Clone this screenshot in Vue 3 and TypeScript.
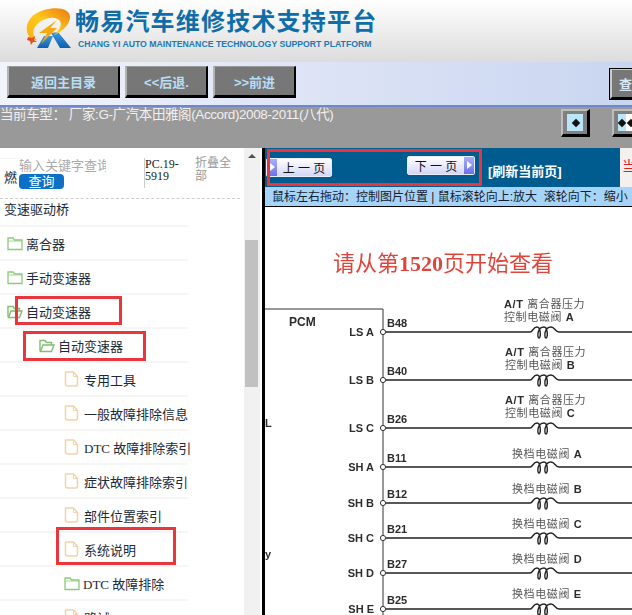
<template>
  <div class="page">
    <header class="brand">
      <svg class="logo" viewBox="0 0 50 50" width="50" height="50" aria-label="logo">
        <defs>
          <linearGradient id="swoosh" x1="0" y1="1" x2="1" y2="0">
            <stop offset="0" stop-color="#f9b010" />
            <stop offset="0.5" stop-color="#ffc81e" />
            <stop offset="1" stop-color="#e9780f" />
          </linearGradient>
          <linearGradient id="leg" x1="0" y1="0" x2="0" y2="1">
            <stop offset="0" stop-color="#3b9be0" />
            <stop offset="1" stop-color="#0f5fae" />
          </linearGradient>
        </defs>
        <path d="M27 26 L34 25 L47 41 L36 41 Z" fill="url(#leg)" />
        <path d="M13 41 L20 29 L29 29 L24 41 Z" fill="url(#leg)" />
        <path
          d="M8 33 C-2 24 2 8 20 3 C34 -1 47 2 46 11 C45 18 39 24 30 28 C36 23 39 17 35 13 C29 8 16 12 11 20 C8 25 9 30 13 33 Z"
          fill="url(#swoosh)"
        />
        <path d="M33 13 L15 26 L23 26 L17 37 L33 21 L26 21 Z" fill="#f7a90f" />
        <path d="M4 30 L8 31 L11 29 L10 33 L13 35 L9 35 L7 38 L6 34 L3 33 Z" fill="#e2501c" />
      </svg>
      <div class="brand-text">
        <div class="brand-title">畅易汽车维修技术支持平台</div>
        <div class="brand-sub">CHANG YI AUTO MAINTENANCE TECHNOLOGY SUPPORT PLATFORM</div>
      </div>
    </header>

    <nav class="toolbar">
      <button class="tool-btn home">返回主目录</button>
      <button class="tool-btn step">&lt;&lt;后退.</button>
      <button class="tool-btn step">&gt;&gt;前进</button>
      <button class="tool-btn search">查询</button>
    </nav>

    <div class="car-bar">
      <span class="car-text">当前车型： 厂家:G-广汽本田雅阁(Accord)2008-2011(八代)</span>
      <button class="mini-btn single"><span class="mini-face"><i class="dia"></i></span></button>
      <button class="mini-btn double">
        <span class="mini-face split"><i class="dia"></i><i class="dia"></i></span>
      </button>
    </div>

    <main class="main">
      <aside class="side">
        <div class="tree">
          <div class="search-block">
            <div class="cut-row">燃</div>
            <div class="search-col">
              <div class="placeholder">输入关键字查询</div>
              <button class="query-btn">查询</button>
            </div>
            <div class="code-col">PC.19-<br />5919</div>
            <div class="fold-col">折叠全部</div>
          </div>
          <div class="root-row">变速驱动桥</div>
          <div v-for="row in rows" :key="row.label + row.level" class="row" :class="`level-${row.level}`">
            <svg v-if="row.icon === 'file'" class="ico file" viewBox="0 0 15 16" width="15" height="16">
              <path d="M1.5 1 H9.5 L13.5 5.5 V13 Q13.5 15 11.5 15 H3.5 Q1.5 15 1.5 13 Z" fill="#fff" stroke="#f3d2a8" stroke-width="1.5" />
              <path d="M9.5 1 V5.5 H13.5" fill="none" stroke="#f3d2a8" stroke-width="1" />
            </svg>
            <svg v-else-if="row.icon === 'open'" class="ico" viewBox="0 0 16 15" width="16" height="15">
              <path d="M1 13 V2.5 H6 L7.5 4.5 H12.5 V7" fill="none" stroke="#7fbf6f" stroke-width="1.4" />
              <path d="M1.5 13.5 L4 7 H15 L12.5 13.5 Z" fill="#fff" stroke="#7fbf6f" stroke-width="1.4" />
            </svg>
            <svg v-else class="ico" viewBox="0 0 16 15" width="16" height="15">
              <path d="M1 13.5 V2 H6 L7.5 4 H15 V13.5 Z" fill="#fff" stroke="#8ccb7c" stroke-width="1.3" />
              <path d="M1 5 H15" stroke="#8ccb7c" stroke-width="0.8" />
            </svg>
            <span class="label">{{ row.label }}</span>
          </div>
        </div>
        <div class="scrollbar">
          <span class="arrow"></span>
          <span class="thumb"></span>
        </div>
      </aside>

      <section class="viewer">
        <div class="pager">
          <div class="pager-blue">
            <button class="page-btn prev"><i class="page-arrow"></i><span>上 一 页</span></button>
            <button class="page-btn next"><span>下 一 页</span><i class="page-arrow"></i></button>
            <span class="refresh">[刷新当前页]</span>
          </div>
          <div class="pager-end">当</div>
        </div>
        <div class="hint">鼠标左右拖动：控制图片位置 | 鼠标滚轮向上:放大&nbsp;&nbsp;滚轮向下：缩小</div>

        <svg class="diagram" viewBox="265 207 367 408" width="367" height="408">
          <text class="heading" x="333" y="271">请从第<tspan class="heading-num">1520</tspan>页开始查看</text>
          <path d="M265 309 H383 V615" fill="none" stroke="#333" stroke-width="1" />
          <text class="bold pcm" x="289" y="326">PCM</text>
          <text class="bold" x="265" y="427">L</text>
          <text class="bold" x="265" y="558">y</text>
          <g v-for="w in wires" :key="w.pin">
            <path :d="`M386 ${w.y} H530 M559 ${w.y} H632`" stroke="#222" stroke-width="1.7" fill="none" />
            <path
              :d="`M530 ${w.y} C533 ${w.y} 533 ${w.y - 5} 537 ${w.y - 5} C541 ${w.y - 5} 541 ${w.y + 6} 539 ${w.y + 6} C537 ${w.y + 6} 537 ${w.y - 5} 544 ${w.y - 5} C548 ${w.y - 5} 548 ${w.y + 6} 546 ${w.y + 6} C544 ${w.y + 6} 544 ${w.y - 5} 551 ${w.y - 5} C555 ${w.y - 5} 555 ${w.y} 559 ${w.y}`"
              stroke="#222"
              stroke-width="1.4"
              fill="none"
            />
            <circle cx="383" :cy="w.y" r="2.6" fill="#fff" stroke="#333" stroke-width="1" />
            <text class="bold" x="374" :y="w.y + 4" text-anchor="end">{{ w.name }}</text>
            <text class="bold" x="387" :y="w.y - 5">{{ w.pin }}</text>
            <text v-for="(line, i) in w.lines" :key="i" class="cn" :x="w.x" :y="w.top + i * 12.5">
              {{ line[0] }}<tspan class="bold">{{ line[1] }}</tspan>{{ line[2] }}
            </text>
          </g>
        </svg>
      </section>

      <div class="mark mark-auto"></div>
      <div class="mark mark-auto-sub"></div>
      <div class="mark mark-desc"></div>
      <div class="mark mark-pager"></div>
    </main>
  </div>
</template>

<script setup lang="ts">
interface TreeRow {
  label: string
  level: number
  icon: 'folder' | 'open' | 'file'
}

interface Wire {
  name: string
  pin: string
  y: number
  x: number
  top: number
  lines: [string, string, string][]
}

const rows: TreeRow[] = [
  { label: '离合器', level: 0, icon: 'folder' },
  { label: '手动变速器', level: 0, icon: 'folder' },
  { label: '自动变速器', level: 0, icon: 'open' },
  { label: '自动变速器', level: 1, icon: 'open' },
  { label: '专用工具', level: 2, icon: 'file' },
  { label: '一般故障排除信息', level: 2, icon: 'file' },
  { label: 'DTC 故障排除索引', level: 2, icon: 'file' },
  { label: '症状故障排除索引', level: 2, icon: 'file' },
  { label: '部件位置索引', level: 2, icon: 'file' },
  { label: '系统说明', level: 2, icon: 'file' },
  { label: 'DTC 故障排除', level: 2, icon: 'folder' },
  { label: '路试', level: 2, icon: 'file' }
]

const clutch = (letter: string): [string, string, string][] => [
  ['', 'A/T', ' 离合器压力'],
  ['控制电磁阀 ', letter, '']
]

const wires: Wire[] = [
  { name: 'LS A', pin: 'B48', y: 332, x: 504, top: 308, lines: clutch('A') },
  { name: 'LS B', pin: 'B40', y: 380, x: 505, top: 356, lines: clutch('B') },
  { name: 'LS C', pin: 'B26', y: 428, x: 505, top: 404, lines: clutch('C') },
  { name: 'SH A', pin: 'B11', y: 467, x: 512, top: 458, lines: [['换档电磁阀 ', 'A', '']] },
  { name: 'SH B', pin: 'B12', y: 503, x: 512, top: 493, lines: [['换档电磁阀 ', 'B', '']] },
  { name: 'SH C', pin: 'B21', y: 538, x: 512, top: 528, lines: [['换档电磁阀 ', 'C', '']] },
  { name: 'SH D', pin: 'B27', y: 573, x: 512, top: 563, lines: [['换档电磁阀 ', 'D', '']] },
  { name: 'SH E', pin: 'B25', y: 609, x: 512, top: 598, lines: [['换档电磁阀 ', 'E', '']] }
]
</script>

<style>
html,
body {
  margin: 0;
  overflow: hidden;
  background: #fff;
}
</style>

<style scoped>
.page {
  width: 632px;
  height: 615px;
  overflow: hidden;
  display: flex;
  flex-direction: column;
  font-family: "Liberation Sans", "Noto Sans CJK SC", sans-serif;
  position: relative;
}

button {
  font-family: inherit;
  padding: 0;
  margin: 0;
}

/* Top brand strip */
.brand {
  height: 62px;
  flex: none;
  display: flex;
  align-items: flex-start;
  padding: 7px 0 0 24px;
  box-sizing: border-box;
  background: linear-gradient(#fff, #dcdcdc);
}

.logo {
  flex: none;
}

.brand-text {
  margin-left: 1px;
}

.brand-title {
  font-size: 24px;
  line-height: 28px;
  font-weight: 700;
  letter-spacing: 1.2px;
  color: #0f6ea9;
  white-space: nowrap;
  margin-top: 1px;
}

.brand-sub {
  font-size: 8.7px;
  line-height: 12px;
  font-weight: 700;
  color: #2079b6;
  margin: 2px 0 0 3px;
  white-space: nowrap;
}

/* Button strip */
.toolbar {
  height: 45px;
  flex: none;
  display: flex;
  align-items: flex-start;
  gap: 5px;
  padding: 4px 0 0 7px;
  box-sizing: border-box;
  background: linear-gradient(90deg, #f2f4fb, #dfe5f6 45%, #c9d5f0);
  border-bottom: 2px solid #6f87cf;
}

.tool-btn {
  height: 32px;
  flex: none;
  box-sizing: border-box;
  background: #777;
  color: #b7def7;
  font-size: 13px;
  font-weight: 700;
  border-style: solid;
  border-width: 1px 2px 3px 2px;
  border-color: #9a9a9a #000 #000 #b4b4b4;
}

.home {
  width: 113px;
}

.step {
  width: 83px;
}

.search {
  margin: 2px 0 0 308px;
  width: 60px;
  text-align: left;
  padding-left: 7px;
  outline: 1px solid #000;
  outline-offset: -1px;
  border-width: 2px 0 3px 3px;
  border-color: #c8c8c8 #000 #000 #c8c8c8;
  color: #d6e8f5;
}

/* Current vehicle strip */
.car-bar {
  height: 41px;
  flex: none;
  background: #999;
  display: flex;
  align-items: flex-start;
  position: relative;
}

.car-text {
  color: #f0f0f0;
  font-size: 13.5px;
  line-height: 16px;
  white-space: nowrap;
  width: 561px;
  flex: none;
  letter-spacing: -0.4px;
}

.mini-btn {
  height: 28px;
  width: 29px;
  margin-top: 2px;
  flex: none;
  box-sizing: border-box;
  background: #808080;
  padding: 3px 4px 3px 4px;
  border-style: solid;
  border-width: 2px 3px 3px 2px;
  border-color: #bdbdbd #000 #000 #bdbdbd;
}

.mini-face {
  display: flex;
  align-items: center;
  justify-content: flex-end;
  height: 100%;
  padding-right: 4px;
  box-sizing: border-box;
  background: #b9e6f8;
}

.double {
  margin-left: 22px;
  width: 29px;
}

.split {
  justify-content: center;
  gap: 3px;
  padding: 0;
  background: linear-gradient(90deg, #b9e6f8 50%, #fff 50%);
}

.dia {
  width: 6px;
  height: 6px;
  flex: none;
  background: #111;
  transform: rotate(45deg);
}

/* Body */
.main {
  flex: 1;
  display: flex;
  min-height: 0;
  position: relative;
}

.side {
  width: 262px;
  flex: none;
  display: flex;
  background: #fff;
}

.tree {
  width: 244px;
  flex: none;
  overflow: hidden;
}

.search-block {
  height: 51px;
  box-sizing: border-box;
  width: 240px;
  display: flex;
  border-bottom: 1px dashed #ccc;
  padding-top: 10px;
}

.cut-row {
  width: 19px;
  padding: 11px 0 0 4px;
  box-sizing: border-box;
  font-size: 13px;
  line-height: 16px;
  color: #1c2a3a;
  border-top: 1px solid #f4f4f4;
  height: 30px;
}

.search-col {
  width: 87px;
  overflow: hidden;
  margin-right: 38px;
}

.placeholder {
  font-size: 13px;
  line-height: 16px;
  color: #aaa;
  white-space: nowrap;
}

.query-btn {
  display: block;
  width: 45px;
  height: 15px;
  border: 0;
  border-radius: 4px;
  background: #0b70c6;
  color: #fff;
  font-size: 13px;
  line-height: 15px;
}

.code-col {
  width: 51px;
  height: 30px;
  border-left: 1px solid #ccc;
  box-sizing: border-box;
  font-family: "Liberation Serif", serif;
  font-size: 12px;
  line-height: 12px;
  color: #222;
}

.fold-col {
  width: 40px;
  font-size: 12px;
  line-height: 13px;
  color: #999;
  margin-top: -1px;
}

.root-row {
  height: 28px;
  box-sizing: border-box;
  padding: 2px 0 0 4px;
  font-size: 13px;
  line-height: 18px;
  color: #1c2a3a;
  border-bottom: 2px solid #f5f5f5;
  width: 188px;
}

.row {
  height: 34px;
  width: 188px;
  box-sizing: border-box;
  display: flex;
  align-items: center;
  font-size: 13px;
  color: #1c2a3a;
  border-bottom: 2px solid #f5f5f5;
  white-space: nowrap;
  font-family: "Liberation Serif", "Noto Sans CJK SC", serif;
}

.level-0 {
  padding-left: 7px;
}

.level-1 {
  padding-left: 39px;
}

.level-2 {
  padding-left: 64px;
}

.ico {
  flex: none;
  margin-right: 3px;
}

.ico.file {
  margin-right: 5px;
}

.scrollbar {
  width: 16px;
  flex: none;
  background: #f1f1f1;
  position: relative;
}

.arrow {
  position: absolute;
  left: 4px;
  top: 6px;
  border: 4px solid transparent;
  border-top: 0;
  border-bottom: 4px solid #505050;
}

.thumb {
  position: absolute;
  left: 1px;
  top: 92px;
  width: 13px;
  height: 147px;
  background: #c1c1c1;
}

/* Document viewer */
.viewer {
  flex: 1;
  min-width: 0;
  border-left: 3px solid #000;
  display: flex;
  flex-direction: column;
  background: #fff;
}

.pager {
  height: 39px;
  flex: none;
  display: flex;
}

.pager-blue {
  width: 355px;
  flex: none;
  background: #005c8e;
  position: relative;
  display: flex;
  align-items: flex-start;
}

.pager-end {
  flex: 1;
  background: #f4f0f0;
  color: #e02020;
  font-size: 14px;
  line-height: 36px;
  padding-left: 2px;
}

.page-btn {
  height: 19px;
  flex: none;
  box-sizing: border-box;
  display: flex;
  align-items: center;
  border: 1px solid #e8ecff;
  border-radius: 2px;
  background: linear-gradient(#fff, #d3d6f6);
  font-size: 12px;
  color: #111;
  font-family: "Liberation Sans", "Noto Sans CJK SC", sans-serif;
}

.page-btn span {
  flex: 1;
  text-align: center;
}

.prev {
  width: 66px;
  margin: 10px 0 0 1px;
}

.next {
  width: 68px;
  margin: 8px 0 0 75px;
}

.page-arrow {
  width: 10px;
  height: 17px;
  flex: none;
  background: linear-gradient(#aab0f8, #6a70ea);
  position: relative;
}

.page-arrow::after {
  content: "";
  position: absolute;
  left: 3px;
  top: 4px;
  border: 4.5px solid transparent;
  border-right: 0;
  border-left: 5px solid #fff;
}

.refresh {
  margin: 15px 0 0 13px;
  color: #fff;
  font-size: 13px;
  line-height: 18px;
  font-weight: 700;
  white-space: nowrap;
}

.hint {
  height: 20px;
  flex: none;
  box-sizing: border-box;
  background: #a6d4f8;
  border-bottom: 1px solid #000;
  padding-left: 7px;
  font-size: 12px;
  line-height: 20px;
  color: #14202c;
  white-space: nowrap;
  overflow: hidden;
}

.diagram {
  display: block;
  flex: none;
  filter: blur(0.45px);
}

.diagram text {
  font-family: "Liberation Sans", "Noto Sans CJK SC", sans-serif;
}

.diagram .heading {
  font-size: 22px;
  fill: #e0453c;
}

.diagram .heading-num {
  font-family: "Liberation Serif", serif;
  font-weight: 700;
}

.diagram .bold {
  font-size: 11px;
  font-weight: 700;
  fill: #2c2c2c;
}

.diagram .pcm {
  font-size: 12px;
}

.diagram .cn {
  font-size: 11px;
  fill: #555;
  letter-spacing: 0.6px;
}

/* Red review marks drawn over the screenshot */
.mark {
  position: absolute;
  box-sizing: border-box;
  border: 3px solid #e8363c;
  pointer-events: none;
}

.mark-auto {
  left: 15px;
  top: 148px;
  width: 107px;
  height: 29px;
}

.mark-auto-sub {
  left: 23px;
  top: 183px;
  width: 123px;
  height: 30px;
}

.mark-desc {
  left: 56px;
  top: 379px;
  width: 120px;
  height: 38px;
}

.mark-pager {
  left: 267px;
  top: 1px;
  width: 215px;
  height: 37px;
}
</style>
